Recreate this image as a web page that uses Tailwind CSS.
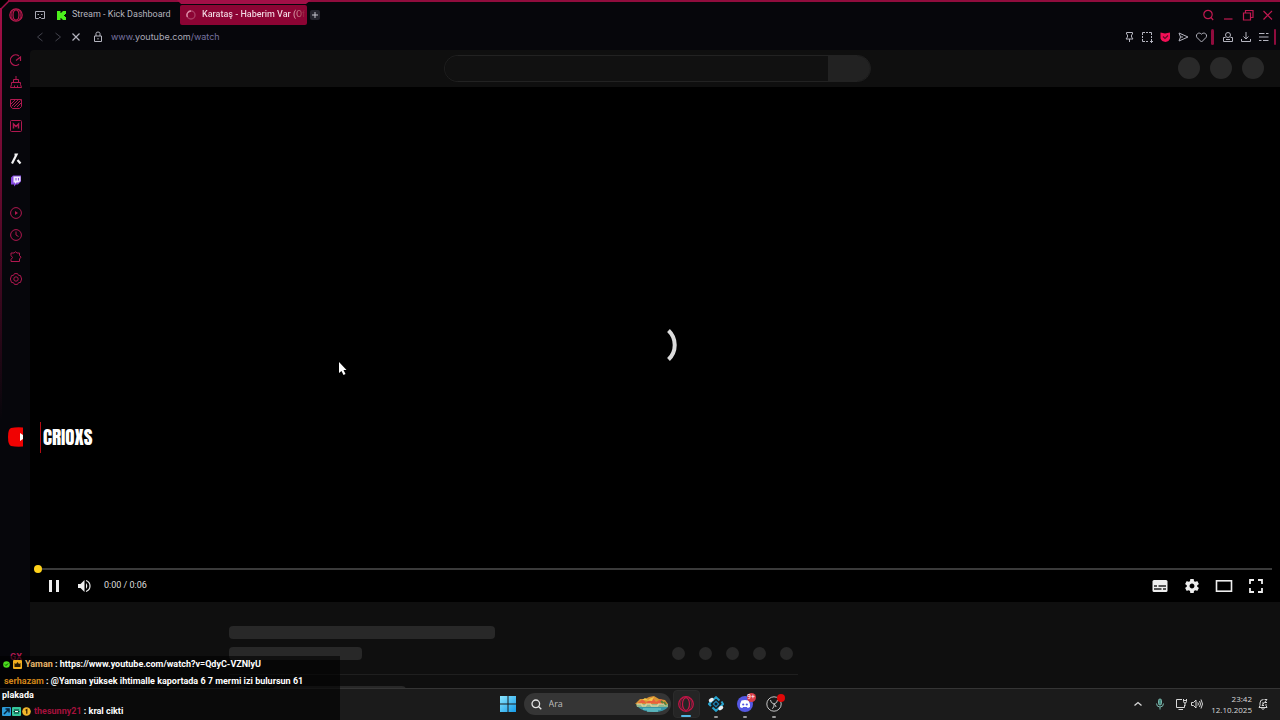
<!DOCTYPE html>
<html lang="tr">
<head>
    <meta charset="UTF-8" />
    <meta name="viewport" content="width=device-width, initial-scale=1" />
    <title>Karataş - Haberim Var</title>
    <script src="https://cdn.jsdelivr.net/npm/@tailwindcss/browser@4"></script>
</head>
<body class="relative flex h-screen flex-col overflow-hidden bg-[#06060b] font-['Roboto',sans-serif] text-[#b9b9c4]">

    <!-- Window frame -->
    <div class="pointer-events-none absolute inset-x-0 top-0 ml-2 h-[2px] bg-[#8f0c3d]"></div>
    <svg class="pointer-events-none absolute left-0 top-0" width="320" height="420" fill="none">
        <defs>
            <linearGradient id="edge" x1="0" y1="0" x2="0" y2="1">
                <stop offset="0" stop-color="#a30f47" />
                <stop offset="0.4" stop-color="#6d0a31" />
                <stop offset="1" stop-color="#6d0a31" stop-opacity="0" />
            </linearGradient>
        </defs>
        <path d="M0 0H8L0 8Z" fill="#000" />
        <path d="M9 1L1 9" stroke="#a30f47" stroke-width="1.5" />
        <rect x="0" y="8" width="2" height="412" fill="url(#edge)" />
        <path d="M177 0H311L306 4H181Z" fill="#a30f47" />
    </svg>

    <!-- Tabs -->
    <header class="flex flex-col">
        <div class="flex h-[26px] items-center pt-1 pr-[6px] pl-[9px]">
            <button aria-label="Opera GX" class="mr-3">
                <svg width="14" height="14" viewBox="0 0 14 14" fill="none" stroke="#c01950"><circle cx="7" cy="7" r="6.2" stroke-width="1.2" /><ellipse cx="7" cy="7" rx="3" ry="5.2" stroke-width="1.2" /><path d="M4.5 1.8C1.5 4 1.5 10 4.5 12.2M9.5 1.8C12.5 4 12.5 10 9.5 12.2" stroke-width=".8" /></svg>
            </button>
            <button aria-label="Çalışma alanı" class="mr-3">
                <svg width="10" height="10" viewBox="0 0 10 10" fill="none" stroke="#a9a9b5"><path d="M.5 1.5H9.5V8.5H6.5L5 7L3.5 8.5H.5Z" /><path d="M2.5 4.5H4M6 4.5H7.5" /></svg>
            </button>
            <a href="#" class="flex h-5 w-[123px] items-center gap-[6px] text-[9px]">
                <svg width="9" height="9" viewBox="0 0 9 9" fill="#4cf01c"><path d="M0 0H3.5V2H4.5V1H5.5V0H9V3H8V4H7V5H8V6H9V9H5.5V8H4.5V7H3.5V9H0Z" /></svg>
                <span class="whitespace-nowrap text-[#b4b4be]">Stream - Kick Dashboard</span>
            </a>
            <a href="#" class="flex h-5 w-[127px] items-center gap-[6px] rounded-xs bg-[#8c0434] pl-[6px] text-[9px]">
                <svg class="shrink-0" width="10" height="10" viewBox="0 0 10 10" fill="none"><circle cx="5" cy="5" r="4" stroke="#a93b62" stroke-width="1.4" /><path d="M5 1A4 4 0 0 0 1.5 7" stroke="#dc8aa6" stroke-width="1.4" /></svg>
                <span class="bg-linear-to-r from-[#f3dce5] from-85% to-[#8c0434] bg-clip-text font-medium whitespace-nowrap text-transparent">Karataş - Haberim Var (Of</span>
            </a>
            <button aria-label="Yeni sekme" class="ml-[3px] grid size-[10px] place-items-center rounded-xs bg-[#24242e]">
                <svg width="8" height="8" viewBox="0 0 8 8" stroke="#c6c6d0"><path d="M4 1V7M1 4H7" /></svg>
            </button>
            <div class="ml-auto flex items-center gap-2 text-[#c01950]">
                <button aria-label="Ara"><svg width="12" height="12" viewBox="0 0 12 12" fill="none" stroke="currentColor" stroke-width="1.2"><circle cx="6" cy="5.5" r="4.2" /><path d="M9 8.5L11.2 11" /></svg></button>
                <button aria-label="Simge durumuna küçült"><svg width="12" height="12" viewBox="0 0 12 12" stroke="currentColor" stroke-width="1.2"><path d="M2 10H10.5" /></svg></button>
                <button aria-label="Geri yükle"><svg width="12" height="12" viewBox="0 0 12 12" fill="none" stroke="currentColor" stroke-width="1.2"><path d="M1.5 4H8.5V11H1.5ZM3.5 4V1.5H11V8.5H8.5" /></svg></button>
                <button aria-label="Kapat"><svg width="12" height="12" viewBox="0 0 12 12" stroke="currentColor" stroke-width="1.2"><path d="M1.5 2L10 10.5M10 2L1.5 10.5" /></svg></button>
            </div>
        </div>

        <!-- Address bar -->
        <div class="flex h-6 items-center pr-1 pb-[2px] pl-[35px] text-[#b4b4bf]">
            <div class="flex items-center gap-2">
                <button aria-label="Geri" class="text-[#44444e]"><svg width="10" height="10" viewBox="0 0 10 10" fill="none" stroke="currentColor"><path d="M7.5 1L2.5 5L7.5 9" /></svg></button>
                <button aria-label="İleri" class="text-[#44444e]"><svg width="10" height="10" viewBox="0 0 10 10" fill="none" stroke="currentColor"><path d="M2.5 1L7.5 5L2.5 9" /></svg></button>
                <button aria-label="Durdur"><svg width="10" height="10" viewBox="0 0 10 10" stroke="currentColor" stroke-width="1.2"><path d="M1.5 1.5L8.5 8.5M8.5 1.5L1.5 8.5" /></svg></button>
            </div>
            <svg class="ml-3" width="10" height="12" viewBox="0 0 10 12" fill="none" stroke="currentColor"><path d="M1.5 5H8.5V10.5H1.5ZM3 5V2.5Q3 1 5 1T7 2.5V5M5 7V8.5" /></svg>
            <a href="#" class="ml-2 font-['Inter',sans-serif] text-[9px] text-[#7773a0]">www.<span class="text-[#a9a9b8]">youtube.com</span>/watch</a>
            <div class="ml-auto flex items-center gap-[6px]">
                <button aria-label="Sabitle"><svg width="12" height="12" viewBox="0 0 12 12" fill="none" stroke="currentColor"><path d="M3.5 1.5H9.5V3L8.5 4V6L10 8H3L4.5 6V4L3.5 3ZM6.5 8V11" /></svg></button>
                <button aria-label="Anlık görüntü"><svg width="12" height="12" viewBox="0 0 12 12" fill="none" stroke="currentColor"><path d="M1.5 4V1.5H4M5 1.5H7M8 1.5H10.5V4M10.5 5V7M10.5 8V12M9 10.5H12M7 10.5H5M4 10.5H1.5V8M1.5 7V5" /></svg></button>
                <button aria-label="Reklam engelleyici"><svg width="12" height="12" viewBox="0 0 12 12" fill="none"><path d="M1.5 1.5L6 2.5L11 1.5V7.5Q10 10.5 6.5 11Q2.5 10.5 1.5 7.5Z" fill="#f20f56" /><path d="M4 5.5L6 7.5L9 4.5" stroke="#5c0825" stroke-width="1.2" /></svg></button>
                <button aria-label="Gönder"><svg width="12" height="12" viewBox="0 0 12 12" fill="none" stroke="currentColor"><path d="M2 2L11 6L2 10L3.5 6ZM3.5 6H6" /></svg></button>
                <button aria-label="Yer imi"><svg width="12" height="12" viewBox="0 0 12 12" fill="none" stroke="currentColor"><path d="M6.5 11L2 6.5C0 4 3.5 .2 6.5 3.2C9.5 .2 13 4 11 6.5Z" /></svg></button>
            </div>
            <span class="ml-1 h-4 w-[3px] rounded-xs bg-[#8f0c3d]"></span>
            <div class="ml-2 flex items-center gap-[6px]">
                <button aria-label="Profil"><svg width="12" height="12" viewBox="0 0 12 12" fill="none" stroke="currentColor"><circle cx="6" cy="4" r="2.5" /><path d="M3.5 6.5H1.5V10.5H10.5V6.5H8.5M4 8.5H8" /></svg></button>
                <button aria-label="İndirilenler"><svg width="12" height="12" viewBox="0 0 12 12" fill="none" stroke="currentColor"><path d="M6 1V7.5M3.5 5.5L6 8L8.5 5.5M1.5 8V10.5H10.5V8" /></svg></button>
                <button aria-label="Menü"><svg width="12" height="12" viewBox="0 0 12 12" fill="none" stroke="currentColor" stroke-width="1.2"><path d="M1 2.5H6.5M8 2.5H10.5M1 6H10.5M1 9.5H3.5M5 9.5H10.5" /></svg></button>
            </div>
            <span class="ml-1 h-4 w-[2px] rounded-xs bg-[#8f0c3d]"></span>
        </div>
    </header>

    <div class="flex min-h-0 flex-1">
        <!-- Sidebar -->
        <nav class="flex w-[30px] shrink-0 flex-col items-center gap-[10px] pt-1 pl-[2px] text-[#b01850]">
            <button aria-label="GX Control"><svg width="12" height="12" viewBox="0 0 12 12" fill="none" stroke="currentColor" stroke-width="1.2"><path d="M9 10.3A5.3 5.3 0 1 1 9 2M6 6.5L10.5 3V7" /></svg></button>
            <button aria-label="GX Cleaner"><svg width="12" height="12" viewBox="0 0 12 12" fill="none" stroke="currentColor"><path d="M6 0V3M3.500 6.500V3.500H8.500V6.500M1.500 6.500H10.500V8.500L11.500 11.500H.5L1.500 8.500ZM4.500 9.500V11M7.500 9.500V11" /></svg></button>
            <button aria-label="GX Mods"><svg width="12" height="12" viewBox="0 0 12 12" fill="none" stroke="currentColor"><path d="M.5 1.5H11.5V8.5L9.5 10.5H2.5L.5 8.5ZM1 6L5 2M1.5 8.5L8 2M4 9L10.5 2.5M7 9L11 5" /></svg></button>
            <button aria-label="Mod mağazası"><svg width="12" height="12" viewBox="0 0 12 12" fill="none" stroke="currentColor"><rect x=".5" y=".5" width="11" height="11" rx="1" /><path d="M3.5 8.5V4L6 6.5L8.5 4V8.5" stroke-width="1.5" /></svg></button>
            <button aria-label="Aria" class="mt-[11px]"><svg width="12" height="12" viewBox="0 0 12 12" fill="none" stroke="#f2f2f4" stroke-width="2.2"><path d="M4.500 1.500H6.500L2 10.500M7.500 7L10.500 10.500" /></svg></button>
            <button aria-label="Twitch"><svg width="12" height="12" viewBox="0 0 12 12"><path d="M1 2.5L3 .5H11V6.5L8 9.5H6L4 11.5V9.5H1Z" fill="#8248dc" /><path d="M3.5 1.5H10.5V6L8.5 7.5H6.5L5 9V7.5H3.5Z" fill="#f1e9ff" /><path d="M6 3V5.5M8.5 3V5.5" stroke="#8248dc" /></svg></button>
            <button aria-label="Oynatıcı" class="mt-[10px]"><svg width="12" height="12" viewBox="0 0 12 12" fill="none" stroke="currentColor"><circle cx="6" cy="6" r="5.4" /><path d="M5 4L8 6L5 8Z" fill="currentColor" stroke="none" /></svg></button>
            <button aria-label="Geçmiş"><svg width="12" height="12" viewBox="0 0 12 12" fill="none" stroke="currentColor"><circle cx="6" cy="6" r="5.4" /><path d="M6 2.5V6L8.5 7.5" /></svg></button>
            <button aria-label="Uzantılar"><svg width="12" height="12" viewBox="0 0 12 12" fill="none" stroke="currentColor"><path d="M1 2H4Q5.5 -.5 7 2H9.5V4.5Q12.5 6 9.5 8V10.5H1V8.5Q4 6.5 1 4.5Z" /></svg></button>
            <button aria-label="Ayarlar"><svg width="12" height="12" viewBox="0 0 12 12" fill="none" stroke="currentColor"><path d="M4.5 .6H7.5L8.5 2.3L10.5 2.6L11.6 6L10.5 9.4L8.5 9.7L7.5 11.4H4.5L3.5 9.7L1.5 9.4L.4 6L1.5 2.6L3.5 2.3Z" /><circle cx="6" cy="6" r="2.2" /></svg></button>
            <button aria-label="YouTube" class="mt-[132px]"><svg width="16" height="20" viewBox="0 0 16 20"><path d="M3 1Q8 0 15 .5V19.5Q8 20 3 19Q0 18 0 10T3 1Z" fill="#f00202" /><path d="M12 6L15 8V12L12 14Z" fill="#fff" /></svg></button>
            <span class="mt-auto pb-[26px] text-[9px] leading-none font-bold">GX</span>
        </nav>

        <!-- Page -->
        <main class="flex min-w-0 flex-1 flex-col overflow-hidden rounded-tl-sm bg-[#0f0f0f]">
            <div class="flex h-[37px] shrink-0 items-center pr-4 pb-px pl-5">
                <div class="flex-1"></div>
                <form class="flex h-[27px] w-[427px] overflow-hidden rounded-full border border-[#222]">
                    <input type="text" aria-label="Arama" class="min-w-0 flex-1 bg-[#111] px-4 text-xs outline-none" />
                    <button type="button" aria-label="Ara" class="w-[42px] bg-[#222]"></button>
                </form>
                <div class="flex flex-1 justify-end gap-[10px]">
                    <span class="size-[22px] rounded-full bg-[#292929]"></span>
                    <span class="size-[22px] rounded-full bg-[#292929]"></span>
                    <span class="size-[22px] rounded-full bg-[#292929]"></span>
                </div>
            </div>

            <section class="relative flex min-h-0 flex-1 flex-col justify-end bg-black pr-2 pb-[3px] pl-1">
                <svg class="absolute inset-0 m-auto" width="46" height="46" viewBox="0 0 46 46" fill="none"><path d="M36.5 8.5A20 20 0 0 1 36.5 37.5" stroke="#dcdcdc" stroke-width="4" /></svg>
                <input type="range" min="0" max="6" value="0" aria-label="İlerleme" class="h-2 w-full appearance-none bg-transparent [&::-webkit-slider-runnable-track]:h-[2px] [&::-webkit-slider-runnable-track]:bg-[#3a3a3a] [&::-webkit-slider-thumb]:-mt-[3px] [&::-webkit-slider-thumb]:size-2 [&::-webkit-slider-thumb]:appearance-none [&::-webkit-slider-thumb]:rounded-full [&::-webkit-slider-thumb]:bg-[#ffd21a]" />
                <div class="flex h-[26px] items-center pl-[5px] text-[#eee]">
                    <button aria-label="Duraklat" class="grid w-[30px] place-items-center"><svg width="12" height="14" viewBox="0 0 12 14" fill="currentColor"><path d="M1 1H4V13H1ZM8 1H11V13H8Z" /></svg></button>
                    <button aria-label="Ses" class="grid w-[30px] place-items-center"><svg width="14" height="14" viewBox="0 0 14 14" fill="currentColor"><path d="M1 5H3.5L7.5 1V13L3.5 9H1Z" /><path d="M9 4Q11.5 7 9 10Z" /><path d="M9 1.5Q13 3 13 7T9 12.5" fill="none" stroke="currentColor" stroke-width="1.2" /></svg></button>
                    <span class="ml-[5px] text-[9px] text-[#ddd]">0:00 / 0:06</span>
                    <div class="ml-auto flex">
                        <button aria-label="Altyazılar" class="grid w-8 place-items-center"><svg width="16" height="12" viewBox="0 0 16 12"><rect x=".5" width="15" height="12" rx="1.5" fill="currentColor" /><path d="M2 6H5M6.5 6H14M2 9H9.5M11 9H14" stroke="#222" stroke-width="1.3" /></svg></button>
                        <button aria-label="Ayarlar" class="grid w-8 place-items-center"><svg width="14" height="14" viewBox="2 2 20 20" fill="currentColor"><path d="M19.43 12.98c.04-.32.07-.64.07-.98s-.03-.66-.07-.98l2.11-1.65c.19-.15.24-.42.12-.64l-2-3.46c-.12-.22-.39-.3-.61-.22l-2.49 1c-.52-.4-1.08-.73-1.69-.98l-.38-2.65C14.46 2.18 14.25 2 14 2h-4c-.25 0-.46.18-.49.42l-.38 2.65c-.61.25-1.17.59-1.69.98l-2.49-1c-.23-.09-.49 0-.61.22l-2 3.46c-.13.22-.07.49.12.64l2.11 1.65c-.04.32-.07.65-.07.98s.03.66.07.98l-2.11 1.65c-.19.15-.24.42-.12.64l2 3.46c.12.22.39.3.61.22l2.49-1c.52.4 1.08.73 1.69.98l.38 2.65c.03.24.24.42.49.42h4c.25 0 .46-.18.49-.42l.38-2.65c.61-.25 1.17-.59 1.69-.98l2.49 1c.23.09.49 0 .61-.22l2-3.46c.12-.22.07-.49-.12-.64l-2.11-1.65zM12 15.5c-1.93 0-3.5-1.57-3.5-3.5s1.57-3.5 3.5-3.5 3.5 1.57 3.5 3.5-1.57 3.5-3.5 3.5z" /></svg></button>
                        <button aria-label="Sinema modu" class="grid w-8 place-items-center"><svg width="18" height="12" viewBox="0 0 18 12" fill="none" stroke="currentColor" stroke-width="1.6"><rect x="1.5" y=".8" width="15" height="10.4" /></svg></button>
                        <button aria-label="Tam ekran" class="grid w-8 place-items-center"><svg width="14" height="14" viewBox="0 0 14 14" fill="none" stroke="currentColor" stroke-width="1.8"><path d="M1 5V1H5M9 1H13V5M13 9V13H9M5 13H1V9" /></svg></button>
                    </div>
                </div>
            </section>

            <!-- Loading placeholder -->
            <section class="h-[86px] shrink-0 overflow-hidden pt-6">
                <div class="ml-[199px] flex w-[569px] max-w-full flex-col">
                    <div class="h-[13px] w-[266px] rounded-sm bg-[#282828]"></div>
                    <div class="mt-2 flex items-center justify-between border-b border-[#1f1f1f] pb-[14px]">
                        <div class="h-[13px] w-[133px] rounded-sm bg-[#282828]"></div>
                        <div class="flex gap-[14px] pr-[5px]">
                            <span class="size-[13px] rounded-full bg-[#282828]"></span>
                            <span class="size-[13px] rounded-full bg-[#282828]"></span>
                            <span class="size-[13px] rounded-full bg-[#282828]"></span>
                            <span class="size-[13px] rounded-full bg-[#282828]"></span>
                            <span class="size-[13px] rounded-full bg-[#282828]"></span>
                        </div>
                    </div>
                    <div class="mt-[11px] flex gap-5">
                        <span class="size-6 rounded-full bg-[#282828]"></span>
                        <span class="h-3 w-[133px] rounded-sm bg-[#282828]"></span>
                    </div>
                </div>
            </section>
        </main>
    </div>

    <!-- Taskbar -->
    <footer class="flex h-8 shrink-0 items-center border-t border-[#353535] bg-[#1b1b1b] pb-px">
        <div class="flex-1 pl-5"></div>
        <div class="flex items-center">
            <button aria-label="Başlat" class="mr-2"><svg width="16" height="16" viewBox="0 0 16 16"><defs><linearGradient id="win" x1="0" y1="0" x2="1" y2="1"><stop stop-color="#8be6ff" /><stop offset="1" stop-color="#159be8" /></linearGradient></defs><path d="M0 0H7.5V7.5H0ZM8.5 0H16V7.5H8.5ZM0 8.5H7.5V16H0ZM8.5 8.5H16V16H8.5Z" fill="url(#win)" /></svg></button>
            <label class="flex h-[22px] w-[147px] items-center gap-[7px] rounded-full bg-[#353535] px-[7px]">
                <svg class="shrink-0" width="11" height="11" viewBox="0 0 11 11" fill="none" stroke="#e4e4e4" stroke-width="1.3"><circle cx="4.8" cy="4.8" r="3.8" /><path d="M7.5 7.5L10.3 10.3" /></svg>
                <input type="text" placeholder="Ara" aria-label="Ara" class="w-0 min-w-0 flex-1 bg-transparent font-['Open_Sans',sans-serif] text-[9px] text-[#ccc] outline-none placeholder:text-[#bdbdbd]" />
                <svg class="-mr-[6px] shrink-0" width="36" height="18" viewBox="0 0 36 18"><path d="M1 9L6 4L11 4L15 2L20 1L25 4L31 5L34 9Z" fill="#d99432" /><path d="M4 8L9 4L12 8L18 2L22 7L27 4L31 9Z" fill="#e85f3d" /><path d="M8 5L11 3L14 5L17 3L20 2L18 6Z" fill="#f1c94c" /><path d="M2 9H34V12H3Z" fill="#92b68b" /><path d="M3 9H8V11H12V9H17V11H24V9H31V11" stroke="#f0d9a1" fill="none" /><path d="M4 12H34Q30 17 20 17Q9 17 4 12Z" fill="#3795a6" /><path d="M9 14H27M13 16H24" stroke="#7cd5d3" /><path d="M27 6L29 8M30 7L32 10" stroke="#56833b" stroke-width="2" /></svg>
            </label>
            <button aria-label="Opera GX" class="relative ml-[2px] grid h-7 w-[27px] place-items-center rounded-sm border border-[#2b2b2b] bg-[#252525] after:absolute after:bottom-0 after:h-[2px] after:w-[10px] after:rounded-full after:bg-[#55b9e8]"><svg width="16" height="16" viewBox="0 0 16 16" fill="none" stroke="#c81448"><circle cx="8" cy="8" r="7.3" stroke-width="1.2" /><ellipse cx="8" cy="8" rx="3.5" ry="6.3" stroke-width="1.2" /><path d="M5 2C1.5 5 1.5 11 5 14M11 2C14.5 5 14.5 11 11 14" stroke-width=".6" /></svg></button>
            <button aria-label="Bot" class="relative ml-[2px] grid h-7 w-[28px] place-items-center after:absolute after:bottom-0 after:h-[2px] after:w-1 after:rounded-full after:bg-[#989898]"><svg width="16" height="16" viewBox="0 0 16 16" fill="none" stroke="#27a4cf" stroke-width="2"><path d="M4.5 4.5L8 1.2L11.5 4.5M13.5 5.5L15 8L11.5 11.5M11 12L8 14.8L4.5 11.5M3 10L1 8L4 5" /><path d="M8 4.5L11.5 8L8 11.5L4.5 8Z" fill="#1d83b5" stroke="none" /><circle cx="8" cy="8" r="1.5" fill="#0b1d2a" stroke="none" /><path d="M2.5 4.5L4 3.5M12 12.5L13.5 11.5" stroke="#e8eef2" stroke-width="3.5" stroke-linecap="round" /></svg></button>
            <button aria-label="Discord" class="relative ml-[1px] grid h-7 w-[29px] place-items-center after:absolute after:bottom-0 after:h-[2px] after:w-1 after:rounded-full after:bg-[#989898]">
                <svg width="16" height="16" viewBox="0 0 16 16"><circle cx="8" cy="8" r="8" fill="#5558e4" /><path d="M4.5 4.5Q8 3.5 11.5 4.5Q13.5 8 13 11Q11.5 12 10.5 12L10 11H6L5.5 12Q4 12 3 11Q2.5 8 4.5 4.5Z" fill="#fff" /><circle cx="6.2" cy="8.5" r="1.1" fill="#5558e4" /><circle cx="9.8" cy="8.5" r="1.1" fill="#5558e4" /></svg>
                <span class="absolute top-[3px] right-1 grid size-[9px] place-items-center rounded-full bg-[#d83b48] text-[7px] leading-none text-white">9+</span>
            </button>
            <button aria-label="OBS Studio" class="relative grid h-7 w-[29px] place-items-center after:absolute after:bottom-0 after:h-[2px] after:w-1 after:rounded-full after:bg-[#989898]">
                <svg width="16" height="16" viewBox="0 0 16 16" fill="none" stroke="#c5c5c5"><circle cx="8" cy="8" r="7.2" fill="#191919" /><path d="M4.5 4Q4.5 7 8 8Q11.5 7 11.5 4M8 8V10Q8 12 6 12.5M8 8Q10 9 10 11" /></svg>
                <span class="absolute top-1 right-1 size-2 rounded-full bg-[#e00808]"></span>
            </button>
        </div>
        <div class="flex flex-1 items-center justify-end pr-3 text-[#d8d8d8]">
            <button aria-label="Gizli simgeler" class="mr-3"><svg width="10" height="10" viewBox="0 0 10 10" fill="none" stroke="currentColor" stroke-width="1.3"><path d="M1.5 6.5L5 3.5L8.5 6.5" /></svg></button>
            <button aria-label="Mikrofon" class="mr-[10px]"><svg width="10" height="12" viewBox="0 0 10 12" fill="none" stroke="#79b5ab"><rect x="3.5" y="1" width="3" height="6" rx="1.5" fill="#498d82" /><path d="M1.5 5.5Q1.5 9 5 9T8.5 5.5M5 9V11.5" /></svg></button>
            <button aria-label="Ağ ve ses" class="mr-2 flex gap-1">
                <svg width="12" height="12" viewBox="0 0 12 12" fill="none" stroke="currentColor"><path d="M7 1.5H1.5V9.5H9.5V7M3.5 11.5H8M8.5 1V3.5Q8.5 5 10 5T11.5 3.5V1M8.5 2.5H11.5M10 5V8" /></svg>
                <svg width="12" height="12" viewBox="0 0 12 12" fill="none" stroke="currentColor"><path d="M.5 4.5H2.5L5 2V10L2.5 7.5H.5ZM6.8 4.5Q8 6 6.8 7.5M8.5 3Q10.5 6 8.5 9M10 1.5Q13 6 10 10.5" /></svg>
            </button>
            <div class="text-right font-['Open_Sans',sans-serif] text-[8px] leading-[11px]">
                <p>23:42</p>
                <p>12.10.2025</p>
            </div>
            <button aria-label="Bildirimler" class="ml-[6px]"><svg width="10" height="12" viewBox="0 0 10 12" fill="none" stroke="currentColor"><path d="M5.5 1.5Q2 1.5 2 5V7.5L1 9.5H9L8 7.5V6M3.5 10.5Q5 12 6.5 10.5M6.5 1.5H9L6.5 4.5H9M4 5H6L4 7.5H6" /></svg></button>
        </div>
    </footer>

    <!-- Stream overlays -->
    <div class="pointer-events-none absolute bottom-[267px] left-10 flex h-[31px] items-center border-l border-[#b40c12] pl-[2px] font-['Anton','Roboto',sans-serif] text-[19px] text-white">CRIOXS</div>

    <svg class="pointer-events-none absolute top-[362px] left-[338px]" width="10" height="14" viewBox="0 0 10 14"><path d="M1 0V11L3.5 9L5.5 13L7.5 12L5.5 8H8.5Z" fill="#fff" /></svg>

    <div class="pointer-events-none absolute bottom-0 left-0 flex h-16 w-[340px] flex-col bg-black/60 text-[9px] leading-[14px] font-bold text-white">
        <p class="flex h-4 items-center gap-[3px] pl-[3px]">
            <svg width="7" height="7" viewBox="0 0 7 7" fill="none"><circle cx="3.5" cy="3.5" r="3.3" fill="#4cdc1e" /><path d="M2 3.5L3 4.5L5 2.5" stroke="#073b00" /></svg>
            <svg width="9" height="9" viewBox="0 0 9 9"><rect width="9" height="9" rx="1" fill="#f3ae1f" /><path d="M1.5 3L3 4L4.5 2L6 4L7.5 3V7H1.5Z" fill="#2a1a00" /></svg>
            <span><span class="text-[#e8b56a]">Yaman</span> : https://www.youtube.com/watch?v=QdyC-VZNlyU</span>
        </p>
        <p class="px-[2px] pt-[2px]"><span class="pl-[2px] text-[#d18418]">serhazam</span> : @Yaman yüksek ihtimalle kaportada 6 7 mermi izi bulursun 61<br />plakada</p>
        <p class="flex items-center gap-px pt-[2px] pl-[2px]">
            <svg width="9" height="9" viewBox="0 0 9 9"><rect width="9" height="9" rx="1" fill="#2c9bd8" /><path d="M2 7L6 3M3.5 2H7V5.5" stroke="#04233a" stroke-width="1.5" fill="none" /></svg>
            <svg width="9" height="9" viewBox="0 0 9 9"><rect width="9" height="9" rx="1" fill="#35c79b" /><path d="M2 3H7M2 6H7M1.5 4.5H7.5" stroke="#052e25" /><path d="M3 4.5H6" stroke="#fff" /></svg>
            <svg width="9" height="9" viewBox="0 0 9 9"><circle cx="4.5" cy="4.5" r="4.3" fill="#f4b72b" /><path d="M3.5 3.2L4.8 2.5V6.8" stroke="#352000" stroke-width="1.2" fill="none" /></svg>
            <span class="pl-[2px]"><span class="text-[#a5113d]">thesunny21</span> : kral cikti</span>
        </p>
    </div>
</body>
</html>
